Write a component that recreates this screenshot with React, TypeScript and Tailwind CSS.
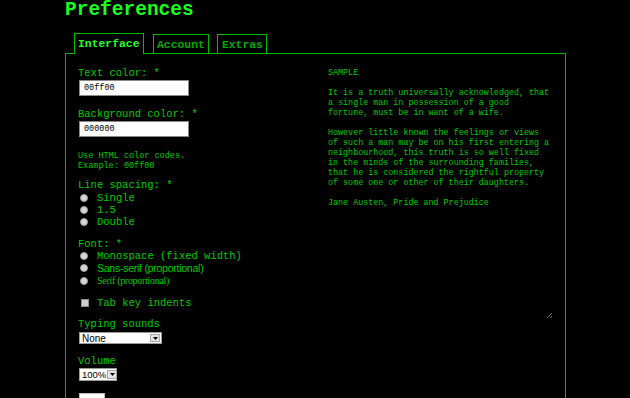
import React from "react";

const mono = { fontFamily: '"Liberation Mono", "Courier New", monospace' };
const sans = { fontFamily: '"Liberation Sans", Arial, sans-serif' };
const serif = { fontFamily: '"Liberation Serif", "Times New Roman", serif' };

function Radio({ label, font, size }: { label: string; font: React.CSSProperties; size: string }) {
  return (
    <div className="flex items-center h-[12px]">
      <span className="ml-[2px] w-[8px] h-[8px] rounded-full bg-[#d6d6d6] border border-[#9c9c9c] shrink-0" />
      <span className={`ml-[9px] leading-[12px] text-[#00cc00] whitespace-nowrap ${size}`} style={font}>
        {label}
      </span>
    </div>
  );
}

function Select({ value, width, size }: { value: string; width: string; size: string }) {
  return (
    <div className={`flex items-stretch h-full bg-white border border-[#9a9a9a] ${width}`}>
      <span className={`flex-1 pl-[2px] leading-[11px] text-black whitespace-nowrap ${size}`} style={sans}>
        {value}
      </span>
      <span className="w-[10px] m-[1px] bg-[#e4e4e4] border border-[#a8a8a8] flex items-center justify-center shrink-0">
        <svg width="5" height="3" viewBox="0 0 5 3">
          <path d="M0 0 H5 L2.5 3 Z" fill="#000" />
        </svg>
      </span>
    </div>
  );
}

export default function App() {
  const label = "text-[10.5px] leading-[12px] text-[#00cc00] h-[12px] whitespace-nowrap";
  return (
    <div className="min-h-screen bg-black overflow-hidden" style={mono}>
      <div className="ml-[65px]">
        <h1 className="text-[19.5px] leading-[20px] font-bold text-[#1aff1a]" style={mono}>
          Preferences
        </h1>
        <div className="flex items-end mt-[14px] ml-[9px] h-[20px] relative z-10">
          <div className="h-[21px] border border-b-0 border-[#00bb00] bg-black px-[3px] flex items-center text-[11.4px] font-bold text-[#22ff22] leading-[18px]">
            Interface
          </div>
          <div className="ml-[9px] h-[20px] border border-b-0 border-[#00bb00] px-[3.5px] flex items-center text-[11.4px] font-bold text-[#00aa00] leading-[18px]">
            Account
          </div>
          <div className="ml-[8px] h-[20px] border border-b-0 border-[#00bb00] px-[3.5px] flex items-center text-[11.4px] font-bold text-[#00aa00] leading-[18px]">
            Extras
          </div>
        </div>
        <div className="w-[501px] h-[400px] border border-[#00bb00] -mt-[1px] pt-[13px] pl-[12px] pr-[11px] grid grid-cols-[244px_1fr]">
          <div className="flex flex-col">
            <div className={label}>Text color: *</div>
            <div className="mt-[1px] ml-[1px] w-[110px] h-[16px] bg-white border border-[#8a8a8a] pl-[4px] text-[8.5px] leading-[14px] text-black" style={mono}>
              00ff00
            </div>
            <div className={`mt-[12px] ${label}`}>Background color: *</div>
            <div className="mt-[1px] ml-[1px] w-[110px] h-[16px] bg-white border border-[#8a8a8a] pl-[4px] text-[8.5px] leading-[14px] text-black" style={mono}>
              000000
            </div>
            <div className="mt-[14px] text-[8.5px] leading-[10px] text-[#00cc00]">
              Use HTML color codes.
              <br />
              Example: 00ff00
            </div>
            <div className={`mt-[8px] ${label}`}>Line spacing: *</div>
            <div className="mt-[1px]">
              <Radio label="Single" font={mono} size="text-[10.5px]" />
              <Radio label="1.5" font={mono} size="text-[10.5px]" />
              <Radio label="Double" font={mono} size="text-[10.5px]" />
            </div>
            <div className={`mt-[10px] ${label}`}>Font: *</div>
            <div>
              <Radio label="Monospace (fixed width)" font={mono} size="text-[10.5px]" />
              <Radio label="Sans-serif (proportional)" font={sans} size="text-[10.5px] tracking-[-0.25px]" />
              <div className="h-[1px]" />
              <Radio label="Serif (proportional)" font={serif} size="text-[10px] tracking-[-0.3px]" />
            </div>
            <div className="mt-[10px] flex items-center h-[12px]">
              <span className="ml-[3px] w-[8px] h-[8px] bg-[#cfcfcf] border border-[#8c8c8c] shrink-0" />
              <span className="ml-[8px] text-[10.5px] leading-[12px] text-[#00cc00] whitespace-nowrap">Tab key indents</span>
            </div>
            <div className={`mt-[9px] ${label}`}>Typing sounds</div>
            <div className="mt-[2px] ml-[1px] h-[12px]">
              <Select value="None" width="w-[83px]" size="text-[10px]" />
            </div>
            <div className={`mt-[11px] ${label}`}>Volume</div>
            <div className="mt-[1px] ml-[1px] h-[13px]">
              <Select value="100%" width="w-[38px]" size="text-[9.5px]" />
            </div>
            <div className="mt-[12px] ml-[1px] w-[26px] h-[18px] bg-white border border-[#bbbbbb]" />
          </div>
          <div className="relative h-[253px] pl-[6px] pt-[1px] text-[8.4px] leading-[10px] text-[#00cc00] whitespace-pre" style={mono}>
            {`SAMPLE

It is a truth universally acknowledged, that
a single man in possession of a good
fortune, must be in want of a wife.

However little known the feelings or views
of such a man may be on his first entering a
neighbourhood, this truth is so well fixed
in the minds of the surrounding families,
that he is considered the rightful property
of some one or other of their daughters.

Jane Austen, Pride and Prejudice`}
            <svg className="absolute right-[1px] bottom-[1px]" width="7" height="7" viewBox="0 0 7 7">
              <path d="M6 1 L1 6 M6 4 L4 6" stroke="#777" strokeWidth="1" />
            </svg>
          </div>
        </div>
      </div>
    </div>
  );
}
